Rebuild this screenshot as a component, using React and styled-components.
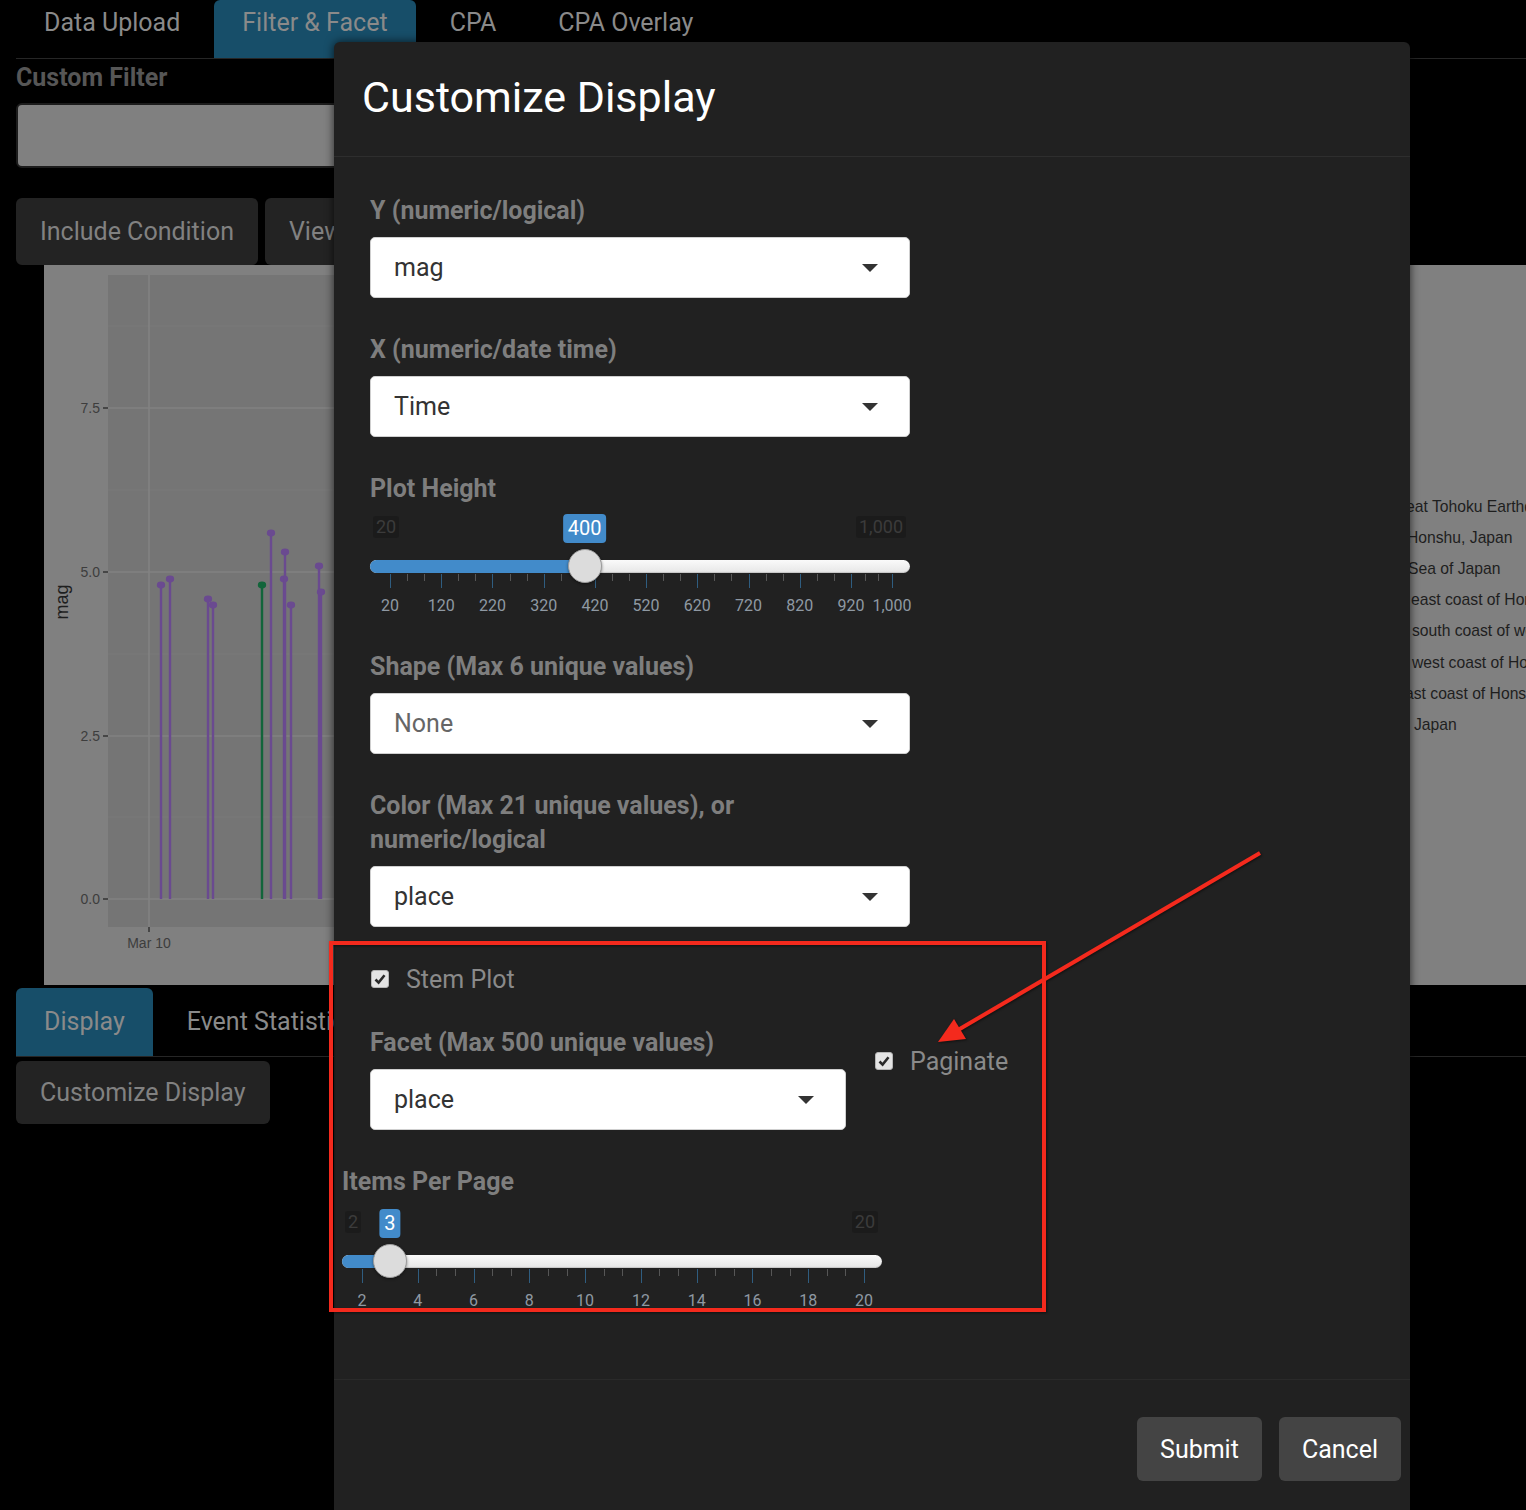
import React from "react"
import styled, { createGlobalStyle } from "styled-components"

const GlobalStyle = createGlobalStyle`
  html, body {
    margin: 0;
    padding: 0;
    background: #000;
  }
  body {
    font-family: Roboto, "Noto Sans", "Liberation Sans", sans-serif;
  }
  * {
    box-sizing: border-box;
  }
`

const Page = styled.div`
  position: relative;
  width: 1526px;
  height: 1510px;
  overflow: hidden;
  background: #000;
`

/* ---------- page behind the dialog (already dimmed) ---------- */

const Tabs = styled.ul`
  display: flex;
  margin: 0 0 0 16px;
  padding: 0;
  list-style: none;
  height: ${p => p.$h}px;
  border-bottom: 1px solid #262626;
`

const Tab = styled.li`
  display: flex;
  align-items: ${p => (p.$top ? "flex-start" : "center")};
  padding: ${p => (p.$top ? "6px 28px 0" : "0 28px")};
  line-height: 34px;
  margin-right: 6px;
  font-size: 25px;
  color: #8a8a8a;
  border-radius: 6px 6px 0 0;
  background: ${p => (p.$active ? "#174e69" : "transparent")};
`

const Content = styled.div`
  padding-left: 16px;
`

const FilterLabel = styled.div`
  font-size: 25px;
  font-weight: 700;
  line-height: 38px;
  color: #565656;
`

const FilterInput = styled.div`
  margin-top: 6px;
  width: 1000px;
  height: 65px;
  background: #808080;
  border: 2px solid #1c1c1c;
  border-radius: 6px;
`

const ButtonRow = styled.div`
  display: flex;
  gap: 7px;
  margin-top: 30px;
`

const DimButton = styled.div`
  display: flex;
  align-items: center;
  height: ${p => p.$h || 67}px;
  padding: 0 24px;
  background: #232323;
  color: #818181;
  font-size: 25px;
  border-radius: 6px;
  white-space: nowrap;
  width: max-content;
`

const ChartBox = styled.div`
  margin-left: 28px;
  height: 720px;
  background: #808080;
  svg {
    display: block;
  }
`

const LowerTabs = styled.div`
  margin-top: 3px;
  margin-left: -16px;
`

const LowerButton = styled.div`
  margin-top: 4px;
`

/* ---------- dialog ---------- */

const Modal = styled.div`
  position: absolute;
  left: 334px;
  top: 42px;
  width: 1076px;
  height: 1500px;
  background: #212121;
  border-radius: 6px 6px 0 0;
  box-shadow: 0 0 10px rgba(0, 0, 0, 0.7);
  display: flex;
  flex-direction: column;
`

const ModalHeader = styled.div`
  height: 115px;
  display: flex;
  align-items: center;
  padding: 0 28px 4px;
  border-bottom: 1px solid #2e2e2e;
`

const ModalTitle = styled.h4`
  margin: 0;
  font-size: 43px;
  font-weight: 400;
  color: #fff;
`

const ModalBody = styled.div`
  height: 1222px;
  padding: 37px 36px 0;
`

const ModalFooter = styled.div`
  display: flex;
  justify-content: flex-end;
  gap: 17px;
  padding: 37px 9px 0;
  border-top: 1px solid #2a2a2a;
`

const FooterButton = styled.div`
  display: flex;
  align-items: center;
  height: 64px;
  padding: 0 23px;
  background: #444;
  color: #fff;
  font-size: 25px;
  border-radius: 6px;
`

const FormGroup = styled.div`
  width: ${p => p.$w || 540}px;
  margin-bottom: ${p => (p.$mb === undefined ? 35 : p.$mb)}px;
  margin-left: ${p => p.$ml || 0}px;
`

const Label = styled.div`
  font-size: 25px;
  font-weight: 700;
  line-height: 34px;
  color: #7e7e7e;
  margin-bottom: ${p => p.$mb || 9}px;
`

const Select = styled.div`
  display: flex;
  align-items: center;
  justify-content: space-between;
  height: 61px;
  padding: 0 31px 0 23px;
  background: #fff;
  border: 1px solid #cfcfcf;
  border-radius: 5px;
  font-size: 25px;
  color: ${p => (p.$muted ? "#666" : "#333")};
`

const Caret = styled.span`
  width: 0;
  height: 0;
  border-left: 8.5px solid transparent;
  border-right: 8.5px solid transparent;
  border-top: 8px solid #333;
`

const CheckRow = styled.label`
  display: flex;
  align-items: center;
  gap: 17px;
  height: 34px;
  padding-left: 1px;
  font-size: 25px;
  color: #8a8a8a;
`

const Box = styled.span`
  display: flex;
  align-items: center;
  justify-content: center;
  width: 18px;
  height: 18px;
  background: #e4e4e4;
  border: 1px solid #b5b5b5;
  border-radius: 3px;
`

const FacetRow = styled.div`
  display: flex;
  gap: 28px;
`

const SideCol = styled.div`
  padding-top: 18px;
`

/* ---------- slider ---------- */

const SliderBox = styled.div`
  position: relative;
  width: 540px;
  height: 101px;
`

const Bounds = styled.div`
  display: flex;
  justify-content: space-between;
  padding: 2px 4px 0 3px;
`

const Bound = styled.span`
  font-size: 18px;
  line-height: 22px;
  padding: 0 3px;
  background: #1b1b1b;
  color: #3b3b3b;
  border-radius: 3px;
`

const Track = styled.div`
  position: absolute;
  top: 46px;
  left: 0;
  right: 0;
  height: 13px;
  border-radius: 7px;
  background: linear-gradient(#fafafa, #e6e6e6);
  box-shadow: inset 0 -1px 1px rgba(0, 0, 0, 0.15);
  overflow: hidden;
`

const Fill = styled.div`
  height: 100%;
  background: #428bca;
`

const Grid = styled.div`
  position: absolute;
  top: 0;
  bottom: 0;
  left: 20px;
  right: 18px;
`

const Badge = styled.span`
  position: absolute;
  top: 0;
  transform: translateX(-50%);
  padding: 0 5px;
  font-size: 20px;
  line-height: 29px;
  color: #fff;
  background: #428bca;
  border-radius: 4px;
`

const Handle = styled.span`
  position: absolute;
  top: 35px;
  width: 34px;
  height: 34px;
  margin-left: -17px;
  border-radius: 50%;
  background: #dcdcdc;
  border: 1.5px solid #9d9d9d;
  box-shadow: 0 1px 3px rgba(0, 0, 0, 0.45);
  z-index: 2;
`

const Tick = styled.span`
  position: absolute;
  top: 60px;
  width: 1px;
  height: ${p => (p.$major ? 14 : 7)}px;
  background: ${p => (p.$major ? "#2f5d80" : "#565656")};
`

const TickLabel = styled.span`
  position: absolute;
  top: 82px;
  transform: translateX(-50%);
  font-size: 16px;
  line-height: 20px;
  color: #8f99a3;
  white-space: nowrap;
`

const fmtNum = v => v.toLocaleString("en-US")

function RangeSlider({ min, max, value, marks }) {
  const pos = v => ((v - min) / (max - min)) * 100
  const minors = []
  marks.forEach((m, i) => {
    if (i === marks.length - 1) return
    const next = marks[i + 1]
    minors.push(m + (next - m) / 3, m + ((next - m) * 2) / 3)
  })
  return (
    <SliderBox>
      <Bounds>
        <Bound>{fmtNum(min)}</Bound>
        <Bound>{fmtNum(max)}</Bound>
      </Bounds>
      <Track>
        <Fill style={{ width: `calc(20px + (100% - 38px) * ${pos(value) / 100})` }} />
      </Track>
      <Grid>
        <Badge style={{ left: `${pos(value)}%` }}>{fmtNum(value)}</Badge>
        <Handle style={{ left: `${pos(value)}%` }} />
        {minors.map(m => (
          <Tick key={"n" + m} style={{ left: `${pos(m)}%` }} />
        ))}
        {marks.map(m => (
          <Tick key={"j" + m} $major style={{ left: `${pos(m)}%` }} />
        ))}
        {marks.map(m => (
          <TickLabel key={"l" + m} style={{ left: `${pos(m)}%` }}>
            {fmtNum(m)}
          </TickLabel>
        ))}
      </Grid>
    </SliderBox>
  )
}

const Check = () => (
  <Box>
    <svg width="14" height="14" viewBox="0 0 14 14">
      <path d="M2.5 7.5 L5.6 10.6 L11.5 3.2" fill="none" stroke="#2a2a2a" strokeWidth="2.6" />
    </svg>
  </Box>
)

/* ---------- stem plot drawing ---------- */

const stems = [
  { x: 117, y: 320 },
  { x: 126, y: 314 },
  { x: 164, y: 334 },
  { x: 169, y: 340 },
  { x: 218, y: 320, green: true },
  { x: 227, y: 268 },
  { x: 240, y: 314 },
  { x: 241, y: 287 },
  { x: 247, y: 340 },
  { x: 275, y: 301 },
  { x: 277, y: 327 },
]

const legend = [
  { x: 1362, y: 247, t: "eat Tohoku Earthquake, Japan" },
  { x: 1363, y: 278, t: "Honshu, Japan" },
  { x: 1364, y: 309, t: "Sea of Japan" },
  { x: 1367, y: 340, t: "east coast of Honshu, Japan" },
  { x: 1368, y: 371, t: "south coast of western Honshu, Japan" },
  { x: 1368, y: 403, t: "west coast of Honshu, Japan" },
  { x: 1361, y: 434, t: "ast coast of Honshu, Japan" },
  { x: 1370, y: 465, t: "Japan" },
]

const StemChart = () => (
  <svg width="1482" height="720" viewBox="0 0 1482 720" fontFamily="'Liberation Sans', Arial, sans-serif">
    <rect x="64" y="10" width="1200" height="652" fill="#757575" />
    {[61, 225, 389, 552].map(y => (
      <line key={"m" + y} x1="64" x2="1264" y1={y} y2={y} stroke="#7b7b7b" strokeWidth="1" />
    ))}
    {[143, 307, 471, 634].map(y => (
      <line key={"g" + y} x1="64" x2="1264" y1={y} y2={y} stroke="#828282" strokeWidth="1.6" />
    ))}
    <line x1="105" x2="105" y1="10" y2="662" stroke="#828282" strokeWidth="1.6" />
    {[
      [143, "7.5"],
      [307, "5.0"],
      [471, "2.5"],
      [634, "0.0"],
    ].map(([y, t]) => (
      <g key={t}>
        <line x1="59" x2="64" y1={y} y2={y} stroke="#333" strokeWidth="1.5" />
        <text x="56" y={y + 5} fontSize="14" fill="#3d3d3d" textAnchor="end">
          {t}
        </text>
      </g>
    ))}
    <line x1="105" x2="105" y1="662" y2="667" stroke="#333" strokeWidth="1.5" />
    <text x="105" y="683" fontSize="14" fill="#3d3d3d" textAnchor="middle">
      Mar 10
    </text>
    <text x="0" y="0" fontSize="18" fill="#1e1e1e" textAnchor="middle" transform="translate(24 337) rotate(-90)">
      mag
    </text>
    {stems.map((s, i) => (
      <g key={i}>
        <line x1={s.x} x2={s.x} y1={s.y} y2="634" stroke={s.green ? "#12653a" : "#6a4a90"} strokeWidth="2.4" />
        <ellipse cx={s.x} cy={s.y} rx="4.2" ry="3.4" fill={s.green ? "#12653a" : "#6a4a90"} />
      </g>
    ))}
    {legend.map(l => (
      <text key={l.t} x={l.x} y={l.y} fontSize="15.7" fill="#1e1e1e">
        {l.t}
      </text>
    ))}
  </svg>
)

/* ---------- annotation drawn on the screenshot ---------- */

const Annotation = styled.svg`
  position: absolute;
  top: 0;
  left: 0;
  pointer-events: none;
  filter: drop-shadow(1px 1px 1px rgba(0, 0, 0, 0.5));
  z-index: 5;
`

const heightMarks = [20, 120, 220, 320, 420, 520, 620, 720, 820, 920, 1000]
const pageMarks = [2, 4, 6, 8, 10, 12, 14, 16, 18, 20]

export default function App() {
  return (
    <Page>
      <GlobalStyle />
      <Tabs $h={59}>
        <Tab $top>Data Upload</Tab>
        <Tab $top $active>
          Filter &amp; Facet
        </Tab>
        <Tab $top>CPA</Tab>
        <Tab $top>CPA Overlay</Tab>
      </Tabs>
      <Content>
        <FilterLabel>Custom Filter</FilterLabel>
        <FilterInput />
        <ButtonRow>
          <DimButton>Include Condition</DimButton>
          <DimButton>View Subset</DimButton>
        </ButtonRow>
        <ChartBox>
          <StemChart />
        </ChartBox>
        <LowerTabs>
          <Tabs $h={69}>
            <Tab $active>Display</Tab>
            <Tab>Event Statistics</Tab>
          </Tabs>
        </LowerTabs>
        <LowerButton>
          <DimButton $h={63}>Customize Display</DimButton>
        </LowerButton>
      </Content>

      <Modal>
        <ModalHeader>
          <ModalTitle>Customize Display</ModalTitle>
        </ModalHeader>
        <ModalBody>
          <FormGroup>
            <Label>Y (numeric/logical)</Label>
            <Select>
              mag
              <Caret />
            </Select>
          </FormGroup>
          <FormGroup>
            <Label>X (numeric/date time)</Label>
            <Select>
              Time
              <Caret />
            </Select>
          </FormGroup>
          <FormGroup>
            <Label $mb={8}>Plot Height</Label>
            <RangeSlider min={20} max={1000} value={400} marks={heightMarks} />
          </FormGroup>
          <FormGroup>
            <Label>Shape (Max 6 unique values)</Label>
            <Select $muted>
              None
              <Caret />
            </Select>
          </FormGroup>
          <FormGroup>
            <Label>Color (Max 21 unique values), or numeric/logical</Label>
            <Select>
              place
              <Caret />
            </Select>
          </FormGroup>
          <FormGroup $mb={30}>
            <CheckRow>
              <Check />
              Stem Plot
            </CheckRow>
          </FormGroup>
          <FacetRow>
            <FormGroup $w={476}>
              <Label>Facet (Max 500 unique values)</Label>
              <Select>
                place
                <Caret />
              </Select>
            </FormGroup>
            <SideCol>
              <CheckRow>
                <Check />
                Paginate
              </CheckRow>
            </SideCol>
          </FacetRow>
          <FormGroup $ml={-28}>
            <Label $mb={10}>Items Per Page</Label>
            <RangeSlider min={2} max={20} value={3} marks={pageMarks} />
          </FormGroup>
        </ModalBody>
        <ModalFooter>
          <FooterButton>Submit</FooterButton>
          <FooterButton>Cancel</FooterButton>
        </ModalFooter>
      </Modal>

      <Annotation width="1526" height="1510" viewBox="0 0 1526 1510">
        <rect x="331" y="943" width="713" height="367" fill="none" stroke="#f42a1d" strokeWidth="4" />
        <line x1="1260" y1="853" x2="958" y2="1030" stroke="#f42a1d" strokeWidth="4" />
        <polygon points="938,1042 954,1019 966,1039" fill="#f42a1d" />
      </Annotation>
    </Page>
  )
}
